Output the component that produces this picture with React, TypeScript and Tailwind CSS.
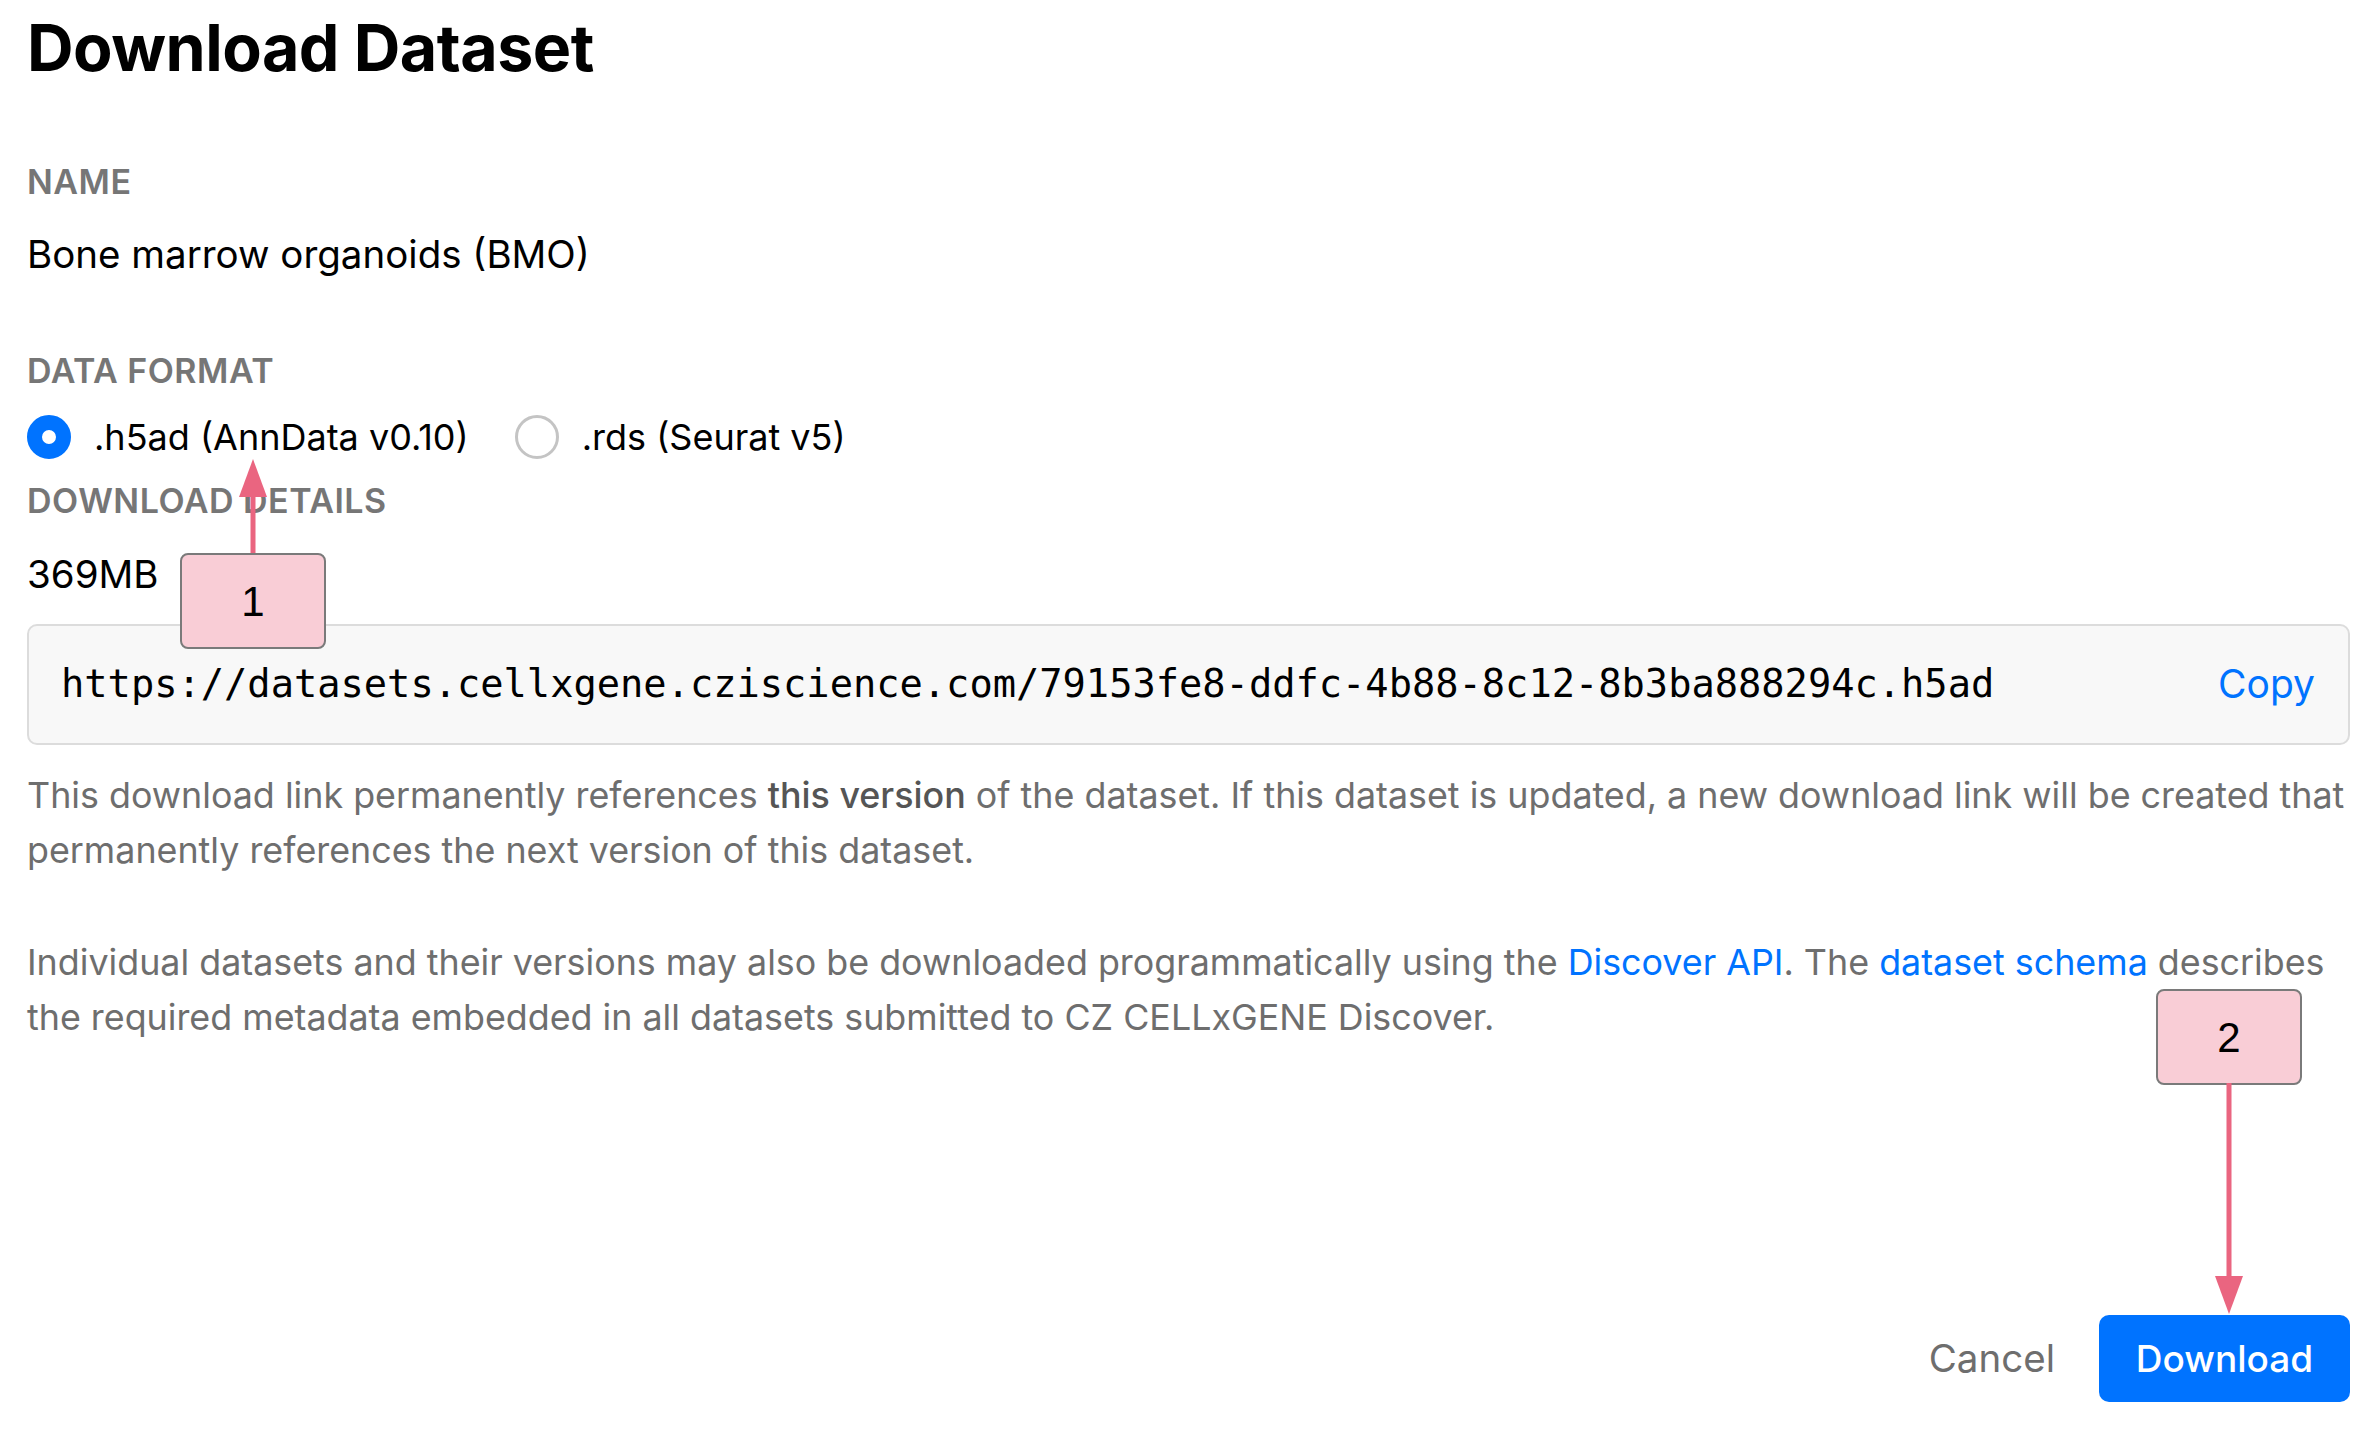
import React, { useState } from 'react';

type Format = 'h5ad' | 'rds';

const DATASET_ID = '79153fe8-ddfc-4b88-8c12-8b3ba888294c';

const RadioOption: React.FC<{ checked: boolean; label: string; onSelect: () => void }> = ({ checked, label, onSelect }) => (
  <label className="flex items-center gap-[23px] cursor-pointer" onClick={onSelect}>
    <span
      className={
        checked
          ? 'block w-[44px] h-[44px] rounded-full border-[15px] border-[#0073ff] bg-white'
          : 'block w-[44px] h-[44px] rounded-full border-[3px] border-[#c4c4c4] bg-white'
      }
    />
    <span className="text-[36px] leading-[48px] text-black">{label}</span>
  </label>
);

const Callout: React.FC<{ n: string; className: string }> = ({ n, className }) => (
  <div
    className={`absolute w-[146px] h-[96px] rounded-[8px] border-2 border-[#7a7a7a] bg-[#f9cdd6] flex items-center justify-center text-[42px] text-black ${className}`}
    style={{ fontFamily: '"Liberation Sans", Arial, sans-serif' }}
  >
    {n}
  </div>
);

const App: React.FC = () => {
  const [format, setFormat] = useState<Format>('h5ad');
  const url = `https://datasets.cellxgene.cziscience.com/${DATASET_ID}.${format === 'h5ad' ? 'h5ad' : 'rds'}`;

  return (
    <div
      className="relative min-h-screen bg-white flex flex-col pl-[27px] pr-[24px] pt-[10px] pb-[28px]"
      style={{ fontFamily: 'Inter, "Noto Sans", sans-serif' }}
    >
      <h1 className="text-[64.5px] leading-[76px] font-bold text-black tracking-[-0.5px]">Download Dataset</h1>

      <div className="mt-[76px] text-[34px] leading-[40px] font-semibold text-[#767676] tracking-[0.5px]">NAME</div>
      <div className="mt-[28px] text-[38.5px] leading-[48px] text-black">Bone marrow organoids (BMO)</div>

      <div className="mt-[73px] text-[34px] leading-[40px] font-semibold text-[#767676] tracking-[0.5px]">DATA FORMAT</div>
      <div className="mt-[22px] flex items-center gap-[46px]">
        <RadioOption checked={format === 'h5ad'} label=".h5ad (AnnData v0.10)" onSelect={() => setFormat('h5ad')} />
        <RadioOption checked={format === 'rds'} label=".rds (Seurat v5)" onSelect={() => setFormat('rds')} />
      </div>

      <div className="mt-[20px] text-[34px] leading-[40px] font-semibold text-[#767676] tracking-[0.5px]">DOWNLOAD DETAILS</div>
      <div className="mt-[29px] text-[38.5px] leading-[48px] text-black">369MB</div>

      <div className="mt-[26px] h-[121px] rounded-[10px] border-2 border-[#dcdcdc] bg-[#f8f8f8] flex items-center justify-between pl-[32px] pr-[33px]">
        <span className="text-[38.7px] text-black" style={{ fontFamily: '"DejaVu Sans Mono", "Liberation Mono", monospace' }}>
          {url}
        </span>
        <button className="text-[39px] text-[#0073ff]">Copy</button>
      </div>

      <p className="mt-[23px] text-[35.85px] leading-[55px] text-[#6e6e6e]">
        This download link permanently references <span className="font-medium text-[#555]">this version</span> of the dataset. If this dataset is updated, a new download link will be created that permanently references the next version of this dataset.
      </p>
      <p className="mt-[57px] text-[35.85px] leading-[55px] text-[#6e6e6e]">
        Individual datasets and their versions may also be downloaded programmatically using the{' '}
        <a className="text-[#0073ff]">Discover API</a>. The <a className="text-[#0073ff]">dataset schema</a> describes the required metadata embedded in all datasets submitted to CZ CELLxGENE Discover.
      </p>

      <div className="mt-auto flex items-center justify-end gap-[44px]">
        <button className="text-[38.5px] text-[#6e6e6e]">Cancel</button>
        <button className="w-[251px] h-[87px] rounded-[10px] bg-[#0073ff] text-white text-[37px] font-medium">Download</button>
      </div>

      {/* annotation 1 */}
      <Callout n="1" className="left-[180px] top-[553px]" />
      <svg className="absolute left-[236px] top-[455px]" width="34" height="100" viewBox="0 0 34 100">
        <line x1="17" y1="30" x2="17" y2="98" stroke="#ea6580" strokeWidth="5" />
        <polygon points="17,4 3,42 31,42" fill="#ea6580" />
      </svg>

      {/* annotation 2 */}
      <Callout n="2" className="left-[2156px] top-[989px]" />
      <svg className="absolute left-[2212px] top-[1083px]" width="34" height="234" viewBox="0 0 34 234">
        <line x1="17" y1="0" x2="17" y2="200" stroke="#ea6580" strokeWidth="5" />
        <polygon points="17,231 3,193 31,193" fill="#ea6580" />
      </svg>
    </div>
  );
};

export default App;
